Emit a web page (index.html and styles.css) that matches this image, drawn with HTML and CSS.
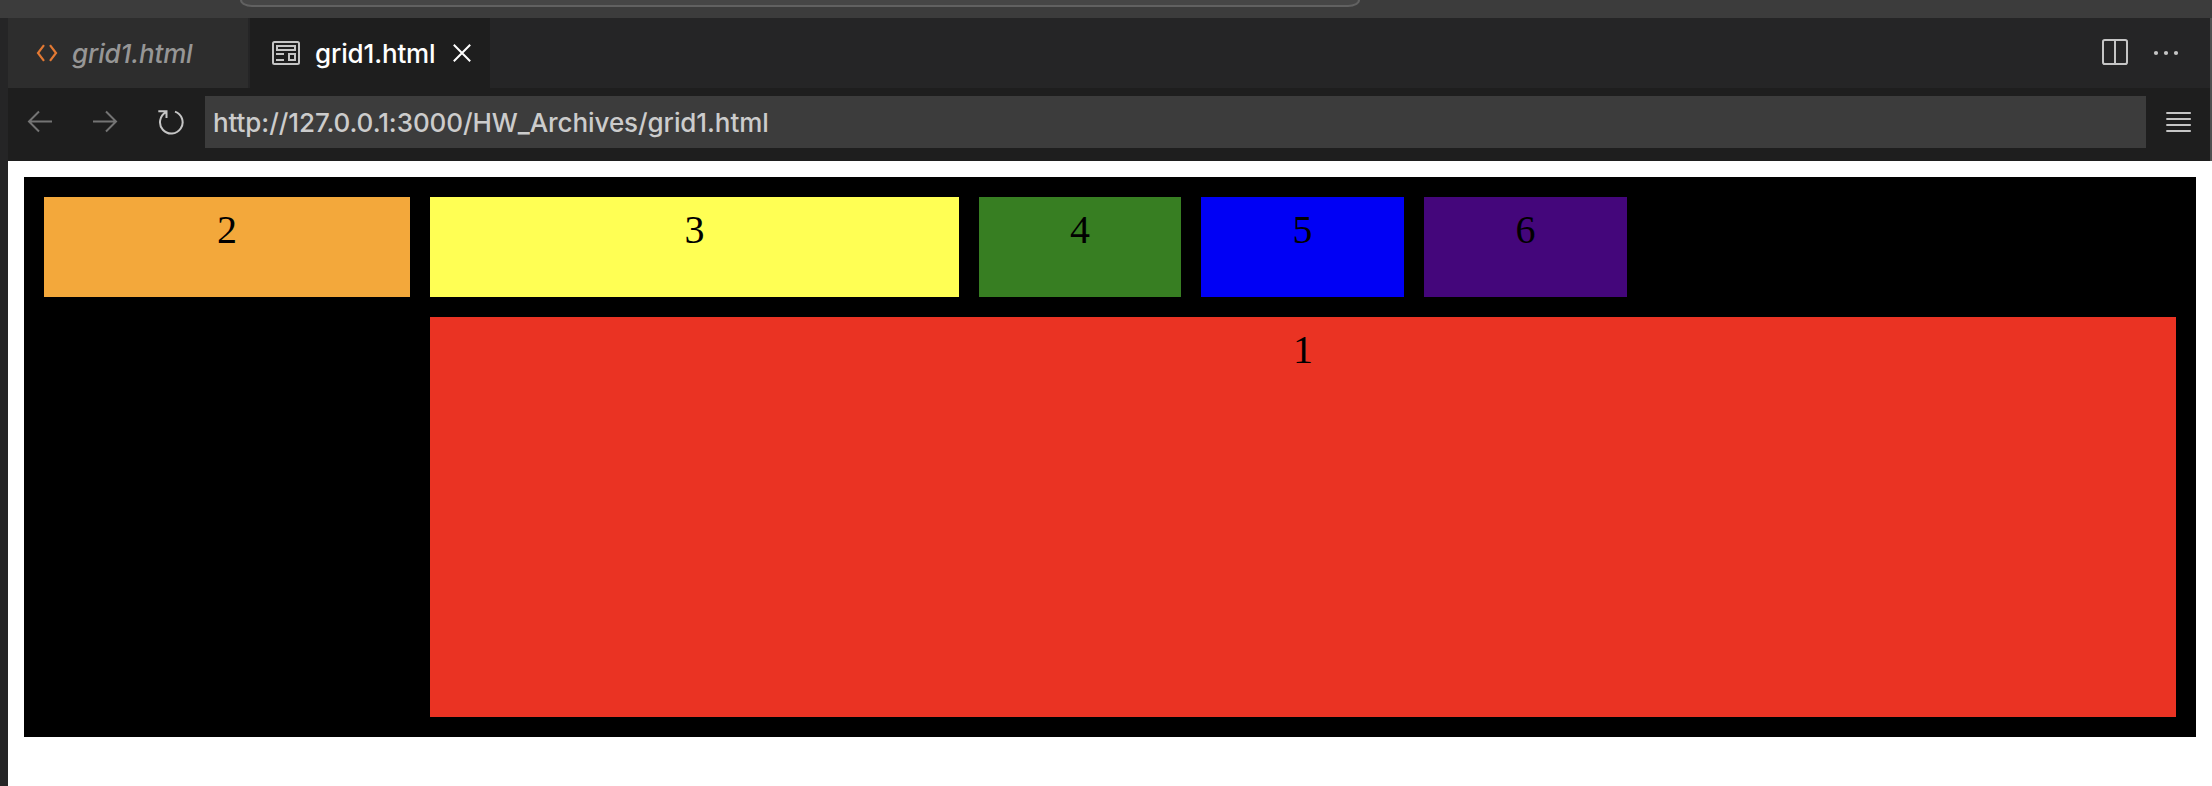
FILE: index.html
```html
<!DOCTYPE html>
<html lang="en">
<head>
<meta charset="utf-8">
<title>grid1.html</title>
<link rel="stylesheet" href="styles.css">
</head>
<body>
<header class="titlebar"><div class="command-box"></div></header>
<div class="workspace">
  <aside class="sidebar-edge"></aside>
  <main class="editor">
    <div class="chrome">
      <div class="chrome-main">
        <nav class="tabs">
          <div class="tab tab-preview">
            <svg class="icon-code" width="24" height="20" viewBox="0 0 24 20"><path d="M9 2.2 3 10l6 7.800M15 2.200 21 10l-6 7.800"/></svg>
            <span class="tab-name name-preview">grid1.html</span>
          </div>
          <div class="tab tab-active">
            <svg class="icon-page" width="28" height="24" viewBox="0 0 28 24"><rect x="1" y="1" width="26" height="22" rx="1.500"/><path d="M5 5h18v4H5zM4 13h8M4 19h8M17 13h6v6h-6z"/></svg>
            <span class="tab-name name-active">grid1.html</span>
            <svg class="icon-close" width="18" height="18" viewBox="0 0 18 18"><path d="m.8.8 16.400 16.400M17.200.8.8 17.200"/></svg>
          </div>
          <div class="tab-actions">
            <svg class="icon-split" width="26" height="26" viewBox="0 0 26 26"><rect x="1" y="1" width="24" height="24" rx="1.800"/><path d="M13 1v24"/></svg>
            <svg class="icon-more" width="26" height="6" viewBox="0 0 26 6"><circle cx="3" cy="3" r="2.100"/><circle cx="13" cy="3" r="2.100"/><circle cx="23" cy="3" r="2.100"/></svg>
          </div>
        </nav>
        <div class="toolbar">
          <svg class="icon-nav" width="26" height="24" viewBox="0 0 26 24"><path d="M12 1.500 2 11.500l10 10M2 11.500h23"/></svg>
          <svg class="icon-nav icon-forward" width="26" height="24" viewBox="0 0 26 24"><path d="m14 1.500 10 10-10 10M24 11.500H1"/></svg>
          <svg class="icon-reload" width="26" height="26" viewBox="0 0 26 26"><path d="M17 2.600A11.300 11.300 0 1 1 8.200 3.200M.3 2.200h8.200v6.800"/></svg>
          <div class="address">http://127.0.0.1:3000/HW_Archives/grid1.html</div>
          <svg class="icon-menu" width="25" height="20" viewBox="0 0 25 20"><path d="M.3 1h24.500M.3 7h24.500M.3 13h24.500M.3 19h24.500"/></svg>
        </div>
      </div>
      <div class="chrome-edge"></div>
    </div>
    <section class="page">
      <div class="grid">
        <div class="cell one">1</div>
        <div class="cell two">2</div>
        <div class="cell three">3</div>
        <div class="cell four">4</div>
        <div class="cell five">5</div>
        <div class="cell six">6</div>
      </div>
    </section>
  </main>
</div>
</body>
</html>
```
FILE: styles.css
```css
* { box-sizing: border-box; }
body { margin: 0; height: 786px; overflow: hidden; background: #fff; }
svg { display: block; flex: none; fill: none; stroke: #c5c5c5; stroke-width: 2; }

.titlebar { height: 18px; background: #3c3c3c; padding-left: 240px; overflow: hidden; }
.command-box {
  width: 1120px; height: 7px; background: #464646;
  border: 2px solid #616161; border-top: 0; border-radius: 0 0 12px 12px / 0 0 7px 7px;
}

.workspace { display: flex; height: 768px; }
.sidebar-edge { width: 8px; background: #252526; }
.editor { flex: 1; min-width: 0; }

.chrome { display: flex; height: 143px; }
.chrome-main { flex: 1; min-width: 0; }
.chrome-edge { width: 2px; background: #505050; }

.tabs {
  display: flex; height: 70px; background: #252526;
  font: 500 26px/32px Inter, "Liberation Sans", sans-serif;
}
.tab { display: flex; align-items: center; width: 242px; height: 70px; border-right: 2px solid #252526; }
.tab-preview { background: #2d2d2d; padding-left: 27px; }
.tab-active { background: #1e1e1e; padding-left: 22px; }
.tab-name { white-space: nowrap; flex: none; padding-top: 2px; letter-spacing: -0.15px; }
.name-preview { margin-left: 13px; color: #969696; font-style: italic; }
.name-active { width: 123px; margin-left: 15px; color: #fff; }
.icon-code { stroke: #e37933; stroke-width: 2.2; }
.icon-close { stroke: #fff; margin-left: 15px; }
.tab-actions { display: flex; align-items: center; margin-left: auto; padding-right: 31px; gap: 25px; }
.icon-split { margin-bottom: 2px; }
.icon-more { fill: #c5c5c5; stroke: none; }

.toolbar { display: flex; height: 73px; background: #1e1e1e; padding: 8px 19px 13px; align-items: center; }
.icon-nav { stroke: #747474; }
.icon-forward { margin-left: 39px; }
.icon-reload { margin-left: 40px; }
.address {
  flex: 1; height: 52px; margin: 0 20px 0 21px; padding-left: 8px;
  background: #3c3c3c; color: #ccc; white-space: nowrap;
  font: 500 26px/54px Inter, "Liberation Sans", sans-serif; letter-spacing: -0.08px;
}

.page { height: 625px; padding: 16px; background: #fff; }
.grid {
  display: grid; width: 2172px; height: 560px; padding: 20px; gap: 20px;
  grid-template-columns: 366px 529px 202px 203px 203px 1fr;
  grid-template-rows: 100px 400px; background: #000;
}
.cell { padding: 9px 10px; text-align: center; font: 40px "Liberation Serif", serif; color: #000; }
.one { grid-area: 2 / 2 / 3 / 7; background: #ea3323; }
.two { grid-area: 1 / 1; background: #f3a83b; }
.three { grid-area: 1 / 2; background: #ffff54; }
.four { grid-area: 1 / 3; background: #377e22; }
.five { grid-area: 1 / 4; background: #0000f5; }
.six { grid-area: 1 / 5; background: #44067b; }
```
